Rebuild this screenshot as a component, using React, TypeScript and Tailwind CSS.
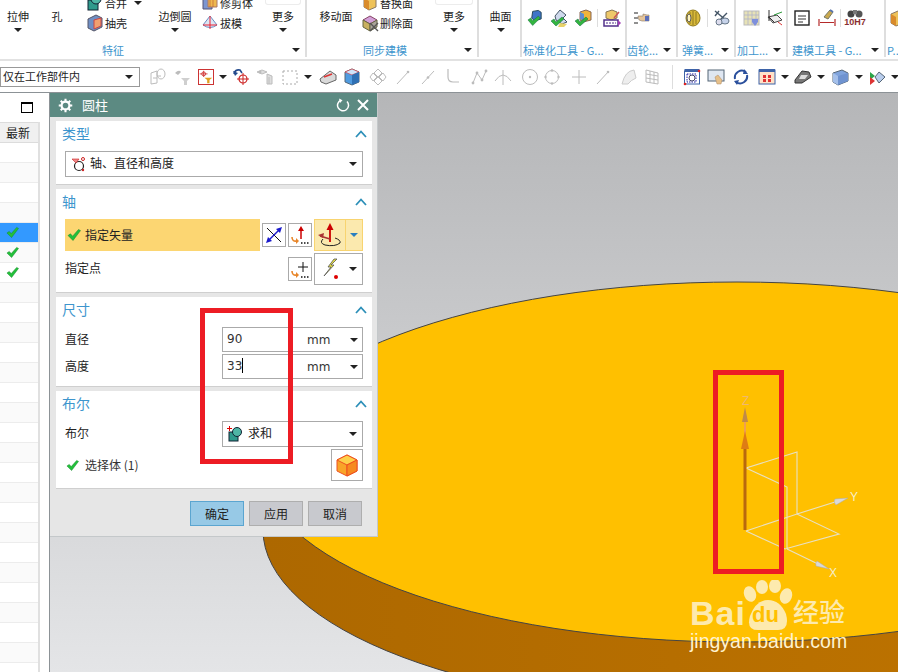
import React from "react";

const Arrow = ({ c = "border-t-[#222]" }: { c?: string }) => (
  <span className={`inline-block w-0 h-0 border-x-[4px] border-t-[4px] border-x-transparent ${c}`} />
);

const Check = ({ s = 14 }: { s?: number }) => (
  <svg width={s} height={s} viewBox="0 0 14 14"><path d="M1 7.5 L3.5 5.8 L5.6 8.2 L11.5 1.5 L13.5 2.6 L6 12.5 Z" fill="#22c03a" stroke="#14852a" strokeWidth="0.5" /></svg>
);

const Chevron = () => (
  <svg width="12" height="8" viewBox="0 0 12 8"><path d="M1 7 L6 1.5 L11 7" fill="none" stroke="#2c8fb8" strokeWidth="1.8" /></svg>
);

const I = ({ children, w = 18, h = 18 }: { children: React.ReactNode; w?: number; h?: number }) => (
  <svg width={w} height={h} viewBox="0 0 18 18" className="shrink-0">{children}</svg>
);

// ribbon icons
const MergeIc = () => <I><rect x="2" y="6" width="10" height="10" fill="#2f9a8c" stroke="#123" /><circle cx="10" cy="5" r="5" fill="#4fb5a5" stroke="#123" /></I>;
const ShellIc = () => <I><path d="M2 5 L10 1 L16 4 V13 L8 17 L2 14 Z" fill="#6f8fc4" stroke="#556" /><path d="M8 6 L15 4 V12 L8 15 Z" fill="#f0a070" stroke="#c44" /></I>;
const TrimIc = () => <I><path d="M2 4 H11 V15 H2 Z" fill="#7d96d0" stroke="#557" /><path d="M7 2 H16 V13 H7 Z" fill="#eeb94f" stroke="#a76" /><path d="M9 2 V13 M12 2 V13" stroke="#b53" strokeWidth="0.6" /></I>;
const DraftIc = () => <I><path d="M9 2 L2 11 Q9 16 16 11 Z" fill="#dce6f4" stroke="#6a8bc0" /><path d="M9 2 V15 M2 11 L16 11" stroke="#e23" strokeWidth="1" /></I>;
const ReplaceIc = () => <I><path d="M3 4 L10 1 L15 4 V13 L8 16 L3 13 Z" fill="#eec25a" stroke="#876" /><path d="M3 4 L8 7 V16 L3 13 Z" fill="#d98b2b" /></I>;
const DeleteIc = () => <I><path d="M2 6 L9 2 L16 6 L9 10 Z" fill="#d2a0d8" stroke="#846" /><path d="M2 6 L9 10 V17 L2 13 Z" fill="#c8b060" stroke="#664" /><path d="M16 6 V13 L9 17 V10 Z" fill="#a9a49a" stroke="#664" /><path d="M9 9 L17 17 M17 9 L9 17" stroke="#555" strokeWidth="1.4" /></I>;
const Std1 = () => <I w={17} h={18}><path d="M6 2 L12 1 L15 3 V10 L8 12 L5 9 Z" fill="#3f74c8" stroke="#245" /><path d="M1 11 L4 9 L6 12 L12 7 L14 9 L6 17 Z" fill="#33b53f" stroke="#164" strokeWidth="0.5" /></I>;
const Std2 = () => <I w={20} h={18}><path d="M5 7 L10 1 L16 6 L13 9 L17 13 L12 15 L6 11 Z" fill="#cfd9ec" stroke="#456" /><path d="M10 14 L17 15 L14 18 H8 Z" fill="#e7d26a" /><path d="M1 12 L4 10 L6 13 L12 8 L14 10 L6 17 Z" fill="#33b53f" stroke="#164" strokeWidth="0.5" /></I>;
const Std3 = () => <I w={18} h={18}><path d="M6 3 L12 1 L17 3 V11 L9 13 L6 11 Z" fill="#f0b43c" stroke="#865" /><path d="M6 3 V10 L10 12 V5 Z" fill="#5e8ed2" /><path d="M1 12 L4 10 L6 13 L12 8 L14 10 L6 17 Z" fill="#33b53f" stroke="#164" strokeWidth="0.5" /></I>;
const Std4 = () => <I w={18} h={18}><path d="M3 3 L9 1 L14 3 V9 L8 11 L3 9 Z" fill="#eec86a" stroke="#875" /><path d="M1 11 H15 V17 H1 Z" fill="#fff" stroke="#51308a" strokeWidth="1.5" /><path d="M3 14 H13" stroke="#51308a" strokeDasharray="2 1" /><path d="M15 11 L18 14 L15 17 Z" fill="#a23fb5" /><path d="M11 9 L16 3" stroke="#c55" strokeWidth="1.4" /></I>;
const Gear = () => <I><path d="M2 4 H6 M2 9 H6 M2 14 H6" stroke="#222" strokeWidth="1" /><path d="M6 7 H11 V5 L15 6 H17 V12 H10 L7 11 Z" fill="#e6c59a" stroke="#876" strokeWidth="0.6" /><rect x="13" y="7" width="4" height="5" fill="#5c6fb8" /></I>;
const Spring = () => <I><ellipse cx="9" cy="9" rx="7" ry="8" fill="#d9b93a" stroke="#8f7a20" /><path d="M6 3 V15 M9 2 V16 M12 3 V15" stroke="#8f7a20" /><ellipse cx="5" cy="9" rx="2" ry="4" fill="#fff4c0" stroke="#555" /></I>;
const Spring2 = () => <I><path d="M2 2 L14 12 M6 2 L2 7 M4 14 L14 4" stroke="#456" strokeWidth="1.4" /><ellipse cx="12" cy="12" rx="4" ry="3" fill="#c7d3ea" stroke="#678" /><ellipse cx="6" cy="13" rx="3" ry="3" fill="#dde" stroke="#678" /></I>;
const Mach1 = () => <I><rect x="1" y="2" width="15" height="14" fill="#e7e2b6" stroke="#bbb" /><path d="M1 6 H16 M1 10 H16 M5 2 V16 M9 2 V16 M13 2 V16" stroke="#a9aecb" strokeWidth="0.7" /><path d="M9 10 H15 V13 L12 17 L9 13 Z" fill="#7e8fdc" /></I>;
const Mach2 = () => <I><path d="M2 8 L11 6 L16 11 L7 14 Z" fill="#eee" stroke="#444" /><path d="M3 1 V12 M3 8 L8 13" stroke="#333" /><path d="M8 6 L16 3" stroke="#2c9a3a" /><path d="M12 13 L16 16" stroke="#d33" /></I>;
const Model1 = () => <I><rect x="2" y="2" width="14" height="14" fill="#fff" stroke="#222" strokeWidth="1.4" /><path d="M5 7 H13 M5 10 H13 M5 13 H10" stroke="#333" /></I>;
const Model2 = () => <I><path d="M1 10 V17 M17 10 V17 M2 13.5 H16" stroke="#b52a2a" strokeWidth="1.2" /><path d="M6 8 L12 1 L15 3 L10 10 Z" fill="#c9a94f" stroke="#776" /><path d="M12 1 L15 3" stroke="#5773b0" strokeWidth="2" /></I>;
const Binoc = () => (
  <div className="w-[22px] h-[18px] flex flex-col items-center">
    <svg width="18" height="9" viewBox="0 0 18 9"><circle cx="5" cy="5" r="3.5" fill="#444" /><circle cx="13" cy="5" r="3.5" fill="#555" /><rect x="7" y="1" width="4" height="4" fill="#777" /></svg>
    <span className="text-[9px] leading-[9px] font-bold text-[#8a3030] font-['Liberation_Sans']">10H7</span>
  </div>
);

const GS = "#bcbcbc";
// toolbar icons
const T = {
  a: <I><path d="M2 5 L8 3 V15 L2 16 Z M8 8 H12" fill="none" stroke={GS} /><ellipse cx="12" cy="6" rx="4" ry="5" fill="none" stroke={GS} /><path d="M4 10 H8" stroke={GS} /></I>,
  b: <I><path d="M2 5 Q6 1 8 4 L5 7 Z" fill={GS} /><path d="M8 10 H17 L14 13 V17 H11 V13 Z" fill="#cfcfcf" /></I>,
  d: <I><path d="M2 6 Q3 1 8 2 L10 5" fill="none" stroke="#244a8c" strokeWidth="1.6" /><path d="M1 3 L3 8 L6 5 Z" fill="#244a8c" /><circle cx="11" cy="11" r="4" fill="none" stroke="#c22" strokeWidth="1.2" /><path d="M11 5 V17 M5 11 H17" stroke="#c22" /></I>,
  e: <I><path d="M1 4 L6 2 L11 4 L6 6 Z M11 6 L16 8 V16 H11 Z" fill="#ddd" stroke={GS} /><path d="M13 9 V16" stroke={GS} /><circle cx="4" cy="4" r="1.5" fill={GS} /></I>,
  f: <I><rect x="2" y="3" width="14" height="13" fill="none" stroke="#aaa" strokeDasharray="2 2" /></I>,
  g: <I><path d="M1 11 L11 3 L17 7 V12 L7 16 L2 14 Z" fill="#d9d9d9" stroke="#666" /><path d="M5 9 L13 6" stroke="#d33" strokeWidth="1.4" /></I>,
  h: <I><path d="M2 4 L9 1 L16 4 V14 L9 17 L2 14 Z" fill="#4f9be0" stroke="#567" /><path d="M2 4 L9 7 L16 4 L9 1 Z" fill="#cfe4fa" stroke="#d33" strokeWidth="0.6" /><path d="M9 7 V17 L16 14 V4 Z" fill="#2f70b4" /></I>,
  i: <I><path d="M9 1 L13 5 L9 9 L5 5 Z M4 5 L8 9 L4 13 L1 9 Z M14 5 L17 9 L14 13 L10 9 Z M9 9 L13 13 L9 17 L5 13 Z" fill="none" stroke={GS} /></I>,
  j: <I><path d="M3 16 L15 3" stroke={GS} /><circle cx="14" cy="4" r="1.3" fill={GS} /></I>,
  k: <I><path d="M3 16 L15 3" stroke={GS} /><circle cx="9" cy="9.5" r="1.3" fill={GS} /></I>,
  l: <I><path d="M4 1 V9 Q4 14 9 14 H15" fill="none" stroke={GS} strokeWidth="1.2" /></I>,
  m: <I><path d="M2 15 L6 5 L11 12 L15 3" fill="none" stroke={GS} /><circle cx="2" cy="15" r="1.4" fill={GS} /><circle cx="6" cy="5" r="1.4" fill={GS} /><circle cx="11" cy="12" r="1.4" fill={GS} /><circle cx="15" cy="3" r="1.4" fill={GS} /></I>,
  n: <I><path d="M1 13 Q9 1 17 13 M9 2 V17" fill="none" stroke={GS} /></I>,
  o: <I><circle cx="9" cy="9" r="7.5" fill="none" stroke={GS} /><circle cx="9" cy="9" r="1.2" fill={GS} /></I>,
  p: <I><circle cx="9" cy="9" r="6.5" fill="none" stroke={GS} /><circle cx="9" cy="2.5" r="1.2" fill={GS} /><circle cx="2.5" cy="9" r="1.2" fill={GS} /><circle cx="15.5" cy="9" r="1.2" fill={GS} /><circle cx="9" cy="15.5" r="1.2" fill={GS} /></I>,
  q: <I><path d="M9 2 V16 M2 9 H16" stroke={GS} /></I>,
  r: <I><path d="M2 16 Q5 3 14 2 L16 10 Q11 12 8 16 Z" fill="#eee" stroke="#ccc" /></I>,
  s: <I><path d="M3 2 L15 5 V16 L3 14 Z M7 3 V15 M11 4 V15.500 M3 6 L15 8 M3 10 L15 12" fill="none" stroke={GS} /></I>,
  t: <I><rect x="1.500" y="3" width="15" height="13" fill="#fff" stroke="#3d63a8" /><rect x="1.500" y="1" width="15" height="3" fill="#3d63a8" /><rect x="4" y="6" width="9" height="8" fill="none" stroke="#22a" strokeDasharray="1.500 1" /><circle cx="9" cy="10" r="3" fill="none" stroke="#446" /><circle cx="2" cy="16" r="1.300" fill="#d22" /><circle cx="16" cy="3" r="1.300" fill="#d22" /></I>,
  u: <I><rect x="1" y="2" width="16" height="11" fill="#dfe7f2" stroke="#567" /><path d="M8 9 L11 7 L15 12 L14 16 L10 16 Z" fill="#e6c08a" stroke="#a86" strokeWidth="0.5" /></I>,
  v: <I><path d="M3 11 A7 7 0 0 1 14 4" fill="none" stroke="#2a4f9c" strokeWidth="2" /><path d="M15 7 A7 7 0 0 1 4 14" fill="none" stroke="#2a4f9c" strokeWidth="2" /><path d="M12 1 L16 6 L11 6 Z M2 13 L7 12 L5 17 Z" fill="#2a4f9c" /></I>,
  w: <I><rect x="1" y="2" width="16" height="14" fill="#ffe2c8" stroke="#3d63a8" /><rect x="1" y="1" width="16" height="3" fill="#3d63a8" /><rect x="5" y="7" width="3" height="3" fill="#d33" /><rect x="10" y="7" width="3" height="3" fill="#d33" /><rect x="5" y="11" width="3" height="3" fill="#d33" /><rect x="10" y="11" width="3" height="3" fill="#d33" /></I>,
  x: <I><path d="M1 12 L8 3 L15 4 L17 9 L8 15 L1 15 Z" fill="#777" stroke="#333" /><path d="M7 7 L14 7 L11 11 L5 11 Z" fill="#ddd" /></I>,
  y: <I><path d="M2 5 L11 2 L17 5 V13 L7 17 L2 14 Z" fill="#7fa3dc" stroke="#567" /><path d="M2 5 L7 8 V17 L2 14 Z" fill="#a5c0ea" /><path d="M7 8 L17 5 V13 L7 17 Z" fill="#6f93d0" /></I>,
  z: <I><path d="M2 4 L7 8 L2 12 Z" fill="#2aa54a" /><path d="M2 9 L7 13 L2 17 Z" fill="#d33" /><path d="M11 4 L17 9 L11 15 L7 9 Z" fill="#b9cdec" stroke="#567" /></I>,
};

const Cell = ({ c = "w-[24px]", children }: { c?: string; children?: React.ReactNode }) => (
  <div className={`flex items-center justify-center h-[20px] shrink-0 ${c}`}>{children}</div>
);

const Big = ({ c, label, arrow = true, cap }: { c: string; label: string; arrow?: boolean; cap?: string }) => (
  <div className={`flex flex-col items-center shrink-0 ${c}`}>
    {cap ? <span className={`block h-[5px] border border-t-0 border-[#ececec] rounded-b-[3px] mb-[3px] ${cap}`} /> : <span className="block h-[8px]" />}
    <span className="text-[11px] leading-[16px] text-[#1c1c1c] whitespace-nowrap">{label}</span>
    {arrow && <span className="mt-[4px] flex"><Arrow /></span>}
  </div>
);

const Small = ({ icon, label, arrow }: { icon: React.ReactNode; label: string; arrow?: boolean }) => (
  <div className="flex items-center h-[20px] gap-[1px]">
    {icon}
    <span className="text-[11px] text-[#1c1c1c] whitespace-nowrap">{label}</span>
    {arrow && <span className="ml-[6px] flex"><Arrow /></span>}
  </div>
);

const Group = ({ w, label, lc, arrow = true, children }: { w: string; label: string; lc: string; arrow?: boolean; children: React.ReactNode }) => (
  <div className={`${w} h-[57px] shrink-0 border-r-2 border-[#dedede] flex flex-col overflow-hidden`}>
    <div className="h-[43px] flex overflow-hidden">{children}</div>
    <div className={`h-[14px] flex items-center ${lc}`}>
      <span className="text-[11px] leading-[14px] text-[#3d95cd] whitespace-nowrap">{label}</span>
      {arrow && <span className="ml-auto mr-[5px] flex"><Arrow /></span>}
    </div>
  </div>
);

function Ribbon() {
  return (
    <div className="h-[61px] flex border-b-2 border-[#e2e2e2] bg-white overflow-hidden shrink-0">
      <Group w="w-[307px]" label="特征" lc="pl-[102px]">
        <Big c="w-[36px]" label="拉伸" />
        <Big c="w-[42px]" label="孔" arrow={false} />
        <div className="w-[78px] pl-[8px] -mt-[7px] shrink-0">
          <Small icon={<MergeIc />} label="合并" arrow />
          <Small icon={<ShellIc />} label="抽壳" />
        </div>
        <Big c="w-[38px]" label="边倒圆" />
        <div className="w-[70px] pl-[7px] -mt-[7px] shrink-0">
          <Small icon={<TrimIc />} label="修剪体" />
          <Small icon={<DraftIc />} label="拔模" />
        </div>
        <Big c="w-[38px]" label="更多" cap="w-[36px]" />
      </Group>
      <Group w="w-[172px]" label="同步建模" lc="pl-[56px]">
        <Big c="w-[58px]" label="移动面" arrow={false} />
        <div className="w-[70px] -ml-[4px] -mt-[7px] shrink-0">
          <Small icon={<ReplaceIc />} label="替换面" />
          <Small icon={<DeleteIc />} label="删除面" />
        </div>
        <Big c="w-[46px]" label="更多" cap="w-[38px]" />
      </Group>
      <Group w="w-[43px]" label="" lc="" arrow={false}>
        <Big c="w-[43px]" label="曲面" />
      </Group>
      <Group w="w-[105px]" label="标准化工具 - G..." lc="pl-[1px]">
        <div className="flex items-start gap-[5px] pl-[5px] pt-[9px]">
          <Std1 /><Std2 /><Std3 />
          <span className="w-px h-[18px] bg-[#ddd]" />
          <Std4 />
        </div>
      </Group>
      <Group w="w-[51px]" label="齿轮..." lc="pl-0">
        <div className="flex items-start pl-[5px] pt-[9px]"><Gear /></div>
      </Group>
      <Group w="w-[58px]" label="弹簧..." lc="pl-[4px]">
        <div className="flex items-start gap-[5px] pl-[6px] pt-[9px]"><Spring /><span className="w-px h-[18px] bg-[#ddd]" /><Spring2 /></div>
      </Group>
      <Group w="w-[52px]" label="加工..." lc="pl-[1px]">
        <div className="flex items-start gap-[5px] pl-[7px] pt-[9px]"><Mach1 /><Mach2 /></div>
      </Group>
      <Group w="w-[98px]" label="建模工具 - G..." lc="pl-[4px]">
        <div className="flex items-start pl-[5px] pt-[9px]">
          <Model1 /><span className="ml-[7px]"><Model2 /></span><span className="ml-[4px] w-px h-[18px] bg-[#ddd]" /><span className="ml-[3px]"><Binoc /></span>
        </div>
      </Group>
      <div className="flex-1 h-[57px] flex flex-col">
        <div className="h-[43px] pl-[2px] pt-[10px]"><ReplaceIc /></div>
        <span className="text-[11px] leading-[14px] text-[#3d95cd] pl-[1px]">P...</span>
      </div>
    </div>
  );
}

function Toolbar() {
  return (
    <div className="h-[31px] flex items-center bg-white shrink-0">
      <div className="w-[140px] h-[20px] border border-[#999] flex items-center justify-between pl-[2px] pr-[6px] shrink-0">
        <span className="text-[11px] text-[#1c1c1c]">仅在工作部件内</span>
        <Arrow />
      </div>
      <Cell c="w-[6px]" />
      <Cell>{T.a}</Cell>
      <Cell>{T.b}</Cell>
      <div className="w-[16px] h-[16px] mx-[4px] border border-[#c33] flex items-center justify-center shrink-0">
        <svg width="14" height="14" viewBox="0 0 18 18"><path d="M1 5 H11 M6 1 V9" stroke="#c22" /><circle cx="6" cy="5" r="2.5" fill="none" stroke="#c22" /><path d="M7 10 H17 L13.500 13 V17 H10.500 V13 Z" fill="#e0a020" /></svg>
      </div>
      <Cell c="w-[10px]"><Arrow /></Cell>
      <Cell c="w-[1px]" />
      <Cell>{T.d}</Cell>
      <Cell>{T.e}</Cell>
      <Cell c="w-[26px]">{T.f}</Cell>
      <Cell c="w-[10px]"><Arrow /></Cell>
      <Cell c="w-[3px]" />
      <Cell>{T.g}</Cell>
      <Cell>{T.h}</Cell>
      <Cell c="w-[2px]" />
      <Cell>{T.i}</Cell>
      <Cell c="w-[25px]">{T.j}</Cell>
      <Cell c="w-[25px]">{T.k}</Cell>
      <Cell c="w-[26px]">{T.l}</Cell>
      <Cell c="w-[2px]" />
      <Cell>{T.m}</Cell>
      <Cell c="w-[22px]">{T.n}</Cell>
      <Cell c="w-[4px]" />
      <Cell>{T.o}</Cell>
      <Cell c="w-[20px]">{T.p}</Cell>
      <Cell c="w-[5px]" />
      <Cell>{T.q}</Cell>
      <Cell>{T.j}</Cell>
      <Cell c="w-[28px]">{T.r}</Cell>
      <Cell c="w-[18px]">{T.s}</Cell>
      <Cell c="w-[11px]" />
      <span className="w-px h-[24px] bg-[#ddd] shrink-0" />
      <Cell c="w-[7px]" />
      <Cell>{T.t}</Cell>
      <Cell>{T.u}</Cell>
      <Cell c="w-[26px]">{T.v}</Cell>
      <Cell c="w-[26px]">{T.w}</Cell>
      <Cell c="w-[9px]"><Arrow /></Cell>
      <Cell c="w-[28px]">{T.x}</Cell>
      <Cell c="w-[8px]"><Arrow /></Cell>
      <Cell c="w-[30px]">{T.y}</Cell>
      <Cell c="w-[8px]"><Arrow /></Cell>
      <Cell c="w-[28px]">{T.z}</Cell>
      <Cell c="w-[8px]"><Arrow /></Cell>
    </div>
  );
}

const rows = Array.from({ length: 27 }, (_, i) => i);

function Navigator() {
  return (
    <div className="w-[49px] shrink-0 bg-white flex flex-col overflow-hidden border-t border-[#8c9296]">
      <div className="h-[29px] flex items-center pl-[21px]">
        <span className="block w-[12px] h-[11px] border border-black border-t-2" />
      </div>
      <div className="w-[40px] border-r-2 border-[#e0e0e0] flex-1 overflow-hidden">
        <div className="h-[21px] bg-[#f0f0f0] border-y border-[#dcdcdc] flex items-center pl-[6px] text-[12px] text-[#222]">最新</div>
        {rows.map((i) => (
          <div key={i} className={`h-[20px] border-b border-[#ececec] flex items-center pl-[6px] ${i === 4 ? "bg-[#3399ff]" : i % 2 === 1 ? "bg-[#fafafa]" : "bg-white"}`}>
            {(i === 4 || i === 5 || i === 6) && <Check s={13} />}
          </div>
        ))}
      </div>
    </div>
  );
}

const Section = ({ title, c, children }: { title: string; c: string; children: React.ReactNode }) => (
  <section className={`bg-white border-b border-[#cfcfcf] mb-[4px] px-[7px] flex flex-col ${c}`}>
    <div className="h-[25px] flex items-center justify-between text-[14px] text-[#3d95cd] shrink-0 -ml-[1px]">
      <span>{title}</span>
      <span className="flex -mr-[2px]"><Chevron /></span>
    </div>
    {children}
  </section>
);

const VecSmall = ({ children, c = "" }: { children: React.ReactNode; c?: string }) => (
  <div className={`w-[24px] h-[24px] border border-[#aaa] bg-white flex items-center justify-center shrink-0 ${c}`}>{children}</div>
);

const DimRow = ({ label, value, caret, c }: { label: string; value: string; caret?: boolean; c?: string }) => (
  <div className={`flex items-center h-[25px] ${c ?? ""}`}>
    <span className="w-[159px] pl-[2px] pb-[2px] text-[12px] text-[#222]">{label}</span>
    <div className="w-[141px] h-[25px] border border-[#aaa] flex items-center text-[12px] text-[#333] font-['DejaVu_Sans'] pl-[4px] pr-[4px]">
      <span className="w-[80px] flex items-center pb-[2px]">{value}{caret && <span className="w-px h-[15px] bg-black" />}</span>
      <span className="w-[43px]">mm</span>
      <Arrow />
    </div>
  </div>
);

const Btn = ({ label, c }: { label: string; c: string }) => (
  <div className={`w-[54px] h-[25px] border flex items-center justify-center text-[12px] text-[#222] ${c}`}>{label}</div>
);

function Dialog() {
  return (
    <div className="absolute left-0 top-0 w-[328px] h-[444px] bg-[#e6e6e6] border-r border-b border-[#c4c8ca] flex flex-col">
      <div className="h-[24px] bg-[#5c8a82] flex items-center pl-[8px] pr-[8px] text-white shrink-0">
        <svg width="15" height="15" viewBox="0 0 16 16"><circle cx="8" cy="8" r="4.2" fill="none" stroke="#fff" strokeWidth="2.4" /><path d="M8 0.8 V3.500 M8 12.500 V15.200 M0.800 8 H3.500 M12.500 8 H15.200 M2.900 2.900 L4.800 4.800 M11.200 11.200 L13.100 13.100 M2.900 13.100 L4.800 11.200 M11.200 4.800 L13.100 2.900" stroke="#fff" strokeWidth="2.2" /></svg>
        <span className="ml-[9px] text-[13px]">圆柱</span>
        <svg className="ml-auto" width="14" height="14" viewBox="0 0 14 14"><path d="M5 2.200 A5.500 5.500 0 1 0 11 3.500" fill="none" stroke="#fff" strokeWidth="1.500" /><path d="M3 0.500 L6.500 2.200 L4 5 Z" fill="#fff" /></svg>
        <svg className="ml-[7px]" width="12" height="12" viewBox="0 0 12 12"><path d="M1 1 L11 11 M11 1 L1 11" stroke="#fff" strokeWidth="2" /></svg>
      </div>
      <div className="pl-[6px] pr-[5px] pt-[4px] flex flex-col">
        <Section title="类型" c="h-[64px]">
          <div className="ml-[2px] mt-[5px] w-[298px] h-[26px] border border-[#aaa] flex items-center pl-[5px] pr-[5px] text-[12px] text-[#222]">
            <svg width="15" height="15" viewBox="0 0 15 15"><circle cx="8" cy="9" r="4.500" fill="none" stroke="#222" strokeWidth="1.200" /><path d="M1 2 H8 L5 6 Z" fill="#e88" stroke="#c22" strokeWidth="0.6" /><circle cx="12" cy="2" r="1.500" fill="none" stroke="#c22" /><circle cx="12" cy="13" r="1.200" fill="#c22" /></svg>
            <span className="ml-[4px] pb-[2px]">轴、直径和高度</span>
            <span className="ml-auto flex"><Arrow /></span>
          </div>
        </Section>
        <Section title="轴" c="h-[104px]">
          <div className="flex items-center h-[32px] ml-[2px] mt-[5px]">
            <div className="w-[195px] h-[32px] bg-[#fcd672] flex items-center pl-[2px] text-[12px] text-[#222]">
              <Check s={14} /><span className="ml-[4px] pb-[1px]">指定矢量</span>
            </div>
            <VecSmall c="ml-[2px]"><svg width="18" height="18" viewBox="0 0 18 18"><path d="M2 2 L16 16" stroke="#111" /><path d="M4 14 L14 4" stroke="#1a1acc" strokeWidth="1.500" /><path d="M17 1 L11 3 L15 7 Z M1 17 L7 15 L3 11 Z" fill="#1a1acc" /></svg></VecSmall>
            <VecSmall c="ml-[2px]"><svg width="20" height="20" viewBox="0 0 20 20"><path d="M11 14 V4" stroke="#c00" strokeWidth="1.500" /><path d="M11 1 L8 6 H14 Z" fill="#c00" /><path d="M2 12 Q2 17 7 16" fill="none" stroke="#e8862a" strokeWidth="1.600" /><path d="M6 13 L9 16 L6 19 Z" fill="#e8862a" /><path d="M11 18 H12.500 M14 18 H15.500 M17 18 H18.500" stroke="#111" strokeWidth="1.600" /></svg></VecSmall>
            <div className="ml-[2px] w-[49px] h-[32px] bg-[#fbe9ae] border border-[#f8d470] flex shrink-0">
              <div className="w-[31px] border-r border-[#f8d470] flex items-center justify-center">
                <svg width="26" height="26" viewBox="0 0 26 26"><path d="M13 20 V6" stroke="#c00" strokeWidth="1.800" /><path d="M13 1 L9.500 8 H16.500 Z" fill="#c00" /><path d="M13 17 L3 14" stroke="#a33" strokeWidth="1.800" /><path d="M1 13 L7 11 L6 16 Z" fill="#a33" /><path d="M6 17 Q2 21 8 23 Q18 25 23 21 Q24 18 18 16" fill="none" stroke="#222" /></svg>
              </div>
              <div className="flex-1 flex items-center justify-center"><Arrow c="border-t-[#2a7fc0]" /></div>
            </div>
          </div>
          <div className="flex items-center h-[32px] ml-[2px] mt-[2px]">
            <span className="w-[223px] pb-[2px] text-[12px] text-[#222]">指定点</span>
            <VecSmall><svg width="20" height="20" viewBox="0 0 20 20"><path d="M13 3 V13 M8 8 H18" stroke="#111" /><path d="M2 12 Q2 17 7 16" fill="none" stroke="#e8862a" strokeWidth="1.600" /><path d="M6 13 L9 16 L6 19 Z" fill="#e8862a" /><path d="M11 18 H12.500 M14 18 H15.500 M17 18 H18.500" stroke="#111" strokeWidth="1.600" /></svg></VecSmall>
            <div className="ml-[2px] w-[49px] h-[32px] border border-[#aaa] flex items-center pl-[5px] shrink-0">
              <svg width="24" height="24" viewBox="0 0 24 24"><path d="M14 2 L8 10 L11 10 L4 19 L14 8 L11 8 L17 2 Z" fill="#e8e040" stroke="#555" strokeWidth="0.8" /><circle cx="16" cy="20" r="2" fill="#d00" /></svg>
              <span className="ml-[5px] flex"><Arrow /></span>
            </div>
          </div>
        </Section>
        <Section title="尺寸" c="h-[90px]">
          <DimRow label="直径" value="90" c="mt-[5px]" />
          <DimRow label="高度" value="33" caret c="mt-[2px]" />
        </Section>
        <Section title="布尔" c="h-[98px]">
          <div className="flex items-center h-[26px] mt-[5px]">
            <span className="w-[159px] pl-[2px] pb-[2px] text-[12px] text-[#222]">布尔</span>
            <div className="w-[141px] h-[26px] border border-[#aaa] flex items-center pl-[4px] pr-[5px] text-[12px] text-[#222]">
              <svg width="16" height="16" viewBox="0 0 16 16"><rect x="2" y="6" width="9" height="9" fill="#2f9a8c" stroke="#123" /><circle cx="10" cy="6" r="4.500" fill="#4fb5a5" stroke="#123" /><path d="M2.500 0 V5 M0 2.500 H5" stroke="#d00" /></svg>
              <span className="ml-[5px] pb-[2px]">求和</span>
              <span className="ml-auto flex"><Arrow /></span>
            </div>
          </div>
          <div className="flex items-start h-[32px] mt-[2px]">
            <div className="flex items-center pl-[3px] mt-[7px] text-[12px] text-[#333]">
              <Check s={13} /><span className="ml-[6px]">选择体 (1)</span>
            </div>
            <div className="ml-auto mr-[2px] w-[32px] h-[32px] border border-[#aaa] flex items-center justify-center">
              <svg width="24" height="24" viewBox="0 0 24 24"><path d="M12 2 L22 7 V18 L12 23 L2 18 V7 Z" fill="#f9a428" stroke="#ee5020" /><path d="M2 7 L12 12 L22 7 L12 2 Z" fill="#fdd04a" stroke="#ee5020" /><path d="M12 12 V23" stroke="#ee5020" /><path d="M12 12 L22 7 V18 L12 23 Z" fill="#f68a20" stroke="#ee5020" /></svg>
            </div>
          </div>
        </Section>
      </div>
      <div className="flex justify-end gap-[5px] pr-[15px] mt-[8px]">
        <Btn label="确定" c="bg-[#97c9e6] border-[#5ba5d0]" />
        <Btn label="应用" c="bg-[#c8c9ce] border-[#aeaeae]" />
        <Btn label="取消" c="bg-[#c8c9ce] border-[#aeaeae]" />
      </div>
    </div>
  );
}

function Scene() {
  return (
    <svg className="absolute inset-0 w-full h-full" viewBox="50 93 848 579" preserveAspectRatio="none">
      <defs>
        <linearGradient id="wall" x1="0" x2="1" y1="0" y2="0">
          <stop offset="0" stopColor="#ad6800" />
          <stop offset="1" stopColor="#c27600" />
        </linearGradient>
      </defs>
      <ellipse cx="741" cy="530" rx="478" ry="180" fill="url(#wall)" stroke="#444" strokeWidth="1" />
      <ellipse cx="737" cy="462" rx="478" ry="180" fill="#ffc000" stroke="#444" strokeWidth="1" />
      <g stroke="#e8e0c4" strokeWidth="1.100" fill="none">
        <path d="M746 468 L797 452 V514 M746 468 L787 487 V549 M746 531 L797 514 L839 534 L785 549 L746 531 M797 514 L835 502 M787 549 L818 564" />
      </g>
      <path d="M835 499 L848 498 L836 505 Q833 502 835 499 Z" fill="#d9d9d9" stroke="#aaa" strokeWidth="0.5" />
      <path d="M817 561 L829 569 L816 566 Q815 563 817 561 Z" fill="#d9d9d9" stroke="#aaa" strokeWidth="0.5" />
      <path d="M745 530 V445" stroke="#b8690e" strokeWidth="3" />
      <path d="M745 445 V415" stroke="#f0a050" strokeWidth="2" />
      <path d="M745 431 L741 449 H749 Z" fill="#de7d14" />
      <path d="M745 407 L742 422 H748 Z" fill="#c08a48" />
    </svg>
  );
}

function AxisLabel({ c, label }: { c: string; label: string }) {
  return <span className={`absolute text-[12px] leading-[12px] font-['Liberation_Sans'] ${c}`}>{label}</span>;
}

function Watermark() {
  return (
    <div className="absolute left-[640px] top-[490px] w-[208px] h-[89px] font-['Liberation_Sans'] text-[#fdeaae]">
      <svg className="absolute left-[48px] -top-[3px]" width="60" height="64" viewBox="0 0 60 64">
        <ellipse cx="12" cy="14" rx="6" ry="8" fill="#fdeaae" transform="rotate(-20 12 14)" />
        <ellipse cx="24" cy="7" rx="6" ry="7" fill="#fdeaae" />
        <ellipse cx="37" cy="6" rx="6" ry="7" fill="#fdeaae" />
        <ellipse cx="48" cy="16" rx="6" ry="8" fill="#fdeaae" transform="rotate(20 48 16)" />
        <path d="M30 20 Q42 20 48 34 Q52 50 40 50 H20 Q8 50 12 36 Q18 20 30 20 Z" fill="#fdeaae" />
      </svg>
      <span className="absolute left-0 top-[13px] text-[34px] leading-[34px] font-bold tracking-[1px] whitespace-nowrap">Bai</span>
      <span className="absolute left-[62px] top-[21px] text-[22px] leading-[22px] font-bold text-[#ffc000] whitespace-nowrap">du</span>
      <span className="absolute left-[103px] top-[13px] text-[26px] leading-[30px] font-['Noto_Sans_CJK_SC'] font-medium whitespace-nowrap">经验</span>
      <span className="absolute left-0 top-[47px] text-[19.5px] leading-[22px] whitespace-nowrap text-[#fff3d0]">jingyan.baidu.com</span>
    </div>
  );
}

export default function App() {
  return (
    <div className="w-[898px] h-[672px] overflow-hidden flex flex-col bg-white font-['Noto_Sans_CJK_SC',sans-serif]">
      <Ribbon />
      <Toolbar />
      <div className="flex flex-1 min-h-0">
        <Navigator />
        <div className="relative flex-1 border-l border-t border-[#8c9296] bg-gradient-to-b from-[#b5b6b8] to-[#e4e5e7]">
          <Scene />
          <Dialog />
          <div className="absolute left-[150px] top-[215px] w-[93px] h-[156px] border-[5px] border-[#ed1c24]" />
          <div className="absolute left-[663px] top-[277px] w-[71px] h-[204px] border-[5px] border-[#ed1c24]" />
          <AxisLabel c="left-[692px] top-[302px] text-[#eeb870]" label="Z" />
          <AxisLabel c="left-[800px] top-[398px] text-[#f6eecb]" label="Y" />
          <AxisLabel c="left-[779px] top-[474px] text-[#f6eecb]" label="X" />
          <Watermark />
        </div>
      </div>
    </div>
  );
}
